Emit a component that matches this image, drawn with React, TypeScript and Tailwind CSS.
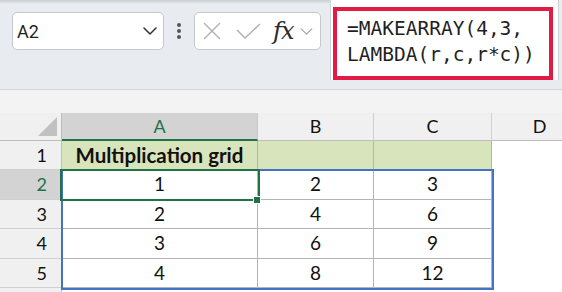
import React from "react";

const cols = [
  { key: "A", w: "w-[196px]" },
  { key: "B", w: "w-[116px]" },
  { key: "C", w: "w-[118px]" },
  { key: "D", w: "w-[96px]" },
];

const rows = [
  { n: 1, h: "h-[29px]", cells: ["Multiplication grid", "", ""] },
  { n: 2, h: "h-[30px]", cells: ["1", "2", "3"] },
  { n: 3, h: "h-[29px]", cells: ["2", "4", "6"] },
  { n: 4, h: "h-[30px]", cells: ["3", "6", "9"] },
  { n: 5, h: "h-[29px]", cells: ["4", "8", "12"] },
];

function Chevron({ className }: { className?: string }) {
  return (
    <svg viewBox="0 0 14 8" className={className} fill="none" strokeWidth="1.5" strokeLinecap="round" strokeLinejoin="round">
      <path d="M1 1l6 6 6-6" />
    </svg>
  );
}

function Toolbar() {
  return (
    <div className="flex h-[90px] border-b border-[#d3d6d9] bg-[#e8ecf0]">
      <div className="flex w-[330px] items-start bg-[linear-gradient(to_bottom,#c9cdd2,#e8ecf0_4px)]">
        <div className="ml-[12px] mt-[12px] flex h-[38px] w-[152px] items-center justify-between rounded-[5px] border border-[#c6c8cb] bg-white pl-[4px] pr-[6px]">
          <span className="font-['Roboto',sans-serif] text-[18px] text-[#1f1f1f]">A2</span>
          <Chevron className="h-[8px] w-[14px] stroke-[#333]" />
        </div>
        <div className="ml-[13px] mt-[23px] flex flex-col gap-[2px]">
          <div className="h-[4px] w-[4px] rounded-full bg-[#555]" />
          <div className="h-[4px] w-[4px] rounded-full bg-[#555]" />
          <div className="h-[4px] w-[4px] rounded-full bg-[#555]" />
        </div>
        <div className="ml-[13px] mt-[12px] flex h-[38px] w-[127px] items-center rounded-[5px] border border-[#c6c8cb] bg-white pl-[8px]">
          <svg viewBox="0 0 18 18" className="h-[18px] w-[18px]" fill="none" stroke="#b3b3b3" strokeWidth="1.5">
            <path d="M1 1l16 16M17 1L1 17" />
          </svg>
          <svg viewBox="0 0 25 16" className="ml-[15px] h-[16px] w-[25px]" fill="none" stroke="#b3b3b3" strokeWidth="1.5">
            <path d="M1 7l8 8L24 1" />
          </svg>
          <span className="ml-[12px] font-['DejaVu_Serif',serif] text-[24px] italic leading-none tracking-[-1px] text-[#2b2b2b]">fx</span>
          <Chevron className="ml-[7px] h-[7px] w-[13px] stroke-[#a8a8a8]" />
        </div>
      </div>
      <div className="h-[80px] w-[229px] border-x border-[#d0d3d6] bg-white pl-[2px] pt-[7px]">
        <div className="h-[73px] w-[220px] border-[4px] border-[#e11b43] pl-[10px] pt-[5px] font-['DejaVu_Sans_Mono',monospace] text-[19.5px] leading-[26px] text-[#1f1f1f]">
          <div>=MAKEARRAY(4,3,</div>
          <div>LAMBDA(r,c,r*c))</div>
        </div>
      </div>
    </div>
  );
}

function Sheet() {
  return (
    <div className="relative w-[588px] text-[19px] text-[#111]">
      <div className="flex h-[28px] text-[18px]">
        <div className="flex w-[62px] items-end justify-end border-r border-b border-[#bdbdbd] bg-[#f0f0f0] pb-[4px] pr-[4px]">
          <svg viewBox="0 0 19 19" className="h-[19px] w-[19px]">
            <path d="M19 0V19H0Z" fill="#c1c1c1" />
          </svg>
        </div>
        {cols.map((c) =>
          c.key === "A" ? (
            <div key={c.key} className={`${c.w} flex items-center justify-center border-r border-b-2 border-r-[#c8c8c8] border-b-[#217346] bg-[#d3d3d3] text-[#217346]`}>
              {c.key}
            </div>
          ) : (
            <div key={c.key} className={`${c.w} flex items-center justify-center border-r border-b border-r-[#d0d0d0] border-b-[#bdbdbd] bg-[#f0f0f0]`}>
              {c.key}
            </div>
          )
        )}
      </div>
      {rows.map((r) => (
        <div key={r.n} className={`flex ${r.h}`}>
          <div
            className={`flex w-[62px] items-center justify-end border-r border-b border-r-[#bdbdbd] border-b-[#cfcfcf] pr-[14px] text-[18px] ${
              r.n === 2 ? "bg-[#d3d3d3] text-[#217346]" : "bg-[#f0f0f0]"
            }`}
          >
            {r.n}
          </div>
          {r.cells.map((v, i) => (
            <div
              key={i}
              className={`${cols[i].w} flex items-center justify-center border-r border-b border-[#b4b4b4] ${
                r.n === 1 ? "bg-[#d8e4bc] font-bold text-[20.5px]" : "bg-white"
              }`}
            >
              {v}
            </div>
          ))}
          <div className="w-[96px] bg-white" />
        </div>
      ))}
      <div className="flex h-[10px]">
        <div className="w-[62px] border-r border-[#bdbdbd] bg-[#f0f0f0]" />
        <div className="flex-1 bg-white" />
      </div>
      <div className="absolute left-[61px] top-[56px] h-[121px] w-[433px] border-2 border-[#4472c4]" />
      <div className="absolute left-[60px] top-[56px] h-[32px] w-[200px] border-2 border-[#217346]" />
      <div className="absolute left-[253px] top-[83px] h-[8px] w-[8px] border border-white bg-[#217346]" />
    </div>
  );
}

export default function App() {
  return (
    <div className="relative h-[292px] w-[562px] overflow-hidden bg-[#f3f3f3] font-['Lato',sans-serif]">
      <Toolbar />
      <div className="h-[23px]" />
      <Sheet />
    </div>
  );
}
